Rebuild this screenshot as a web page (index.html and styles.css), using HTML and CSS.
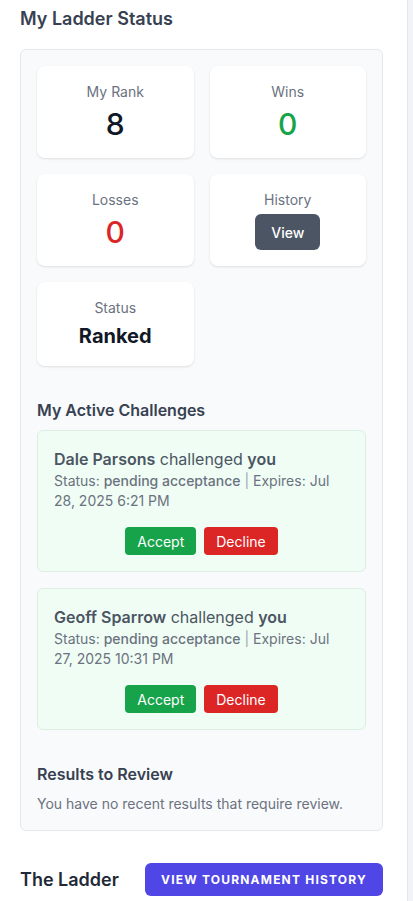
FILE: index.html
```html
<!DOCTYPE html>
<html lang="en">
<head>
<meta charset="utf-8">
<title>My Ladder Status</title>
<link rel="stylesheet" href="styles.css">
</head>
<body>
<div class="layout">
  <main class="main">
    <h2 class="page-title">My Ladder Status</h2>
    <section class="panel">
      <div class="stats">
        <div class="stat">
          <div class="stat-label">My Rank</div>
          <div class="stat-value">8</div>
        </div>
        <div class="stat">
          <div class="stat-label">Wins</div>
          <div class="stat-value win">0</div>
        </div>
        <div class="stat">
          <div class="stat-label">Losses</div>
          <div class="stat-value loss">0</div>
        </div>
        <div class="stat">
          <div class="stat-label">History</div>
          <button class="btn-view">View</button>
        </div>
        <div class="stat">
          <div class="stat-label">Status</div>
          <div class="stat-status">Ranked</div>
        </div>
      </div>

      <h3 class="section-title challenges-title">My Active Challenges</h3>
      <div class="challenges">
        <div class="challenge">
          <p class="challenge-head"><strong>Dale Parsons</strong> challenged <strong>you</strong></p>
          <p class="challenge-meta">Status: <b class="meta-strong">pending acceptance</b> <i class="sep">|</i> Expires: Jul 28, 2025 6:21 PM</p>
          <div class="challenge-actions">
            <button class="btn btn-accept">Accept</button>
            <button class="btn btn-decline">Decline</button>
          </div>
        </div>
        <div class="challenge">
          <p class="challenge-head"><strong>Geoff Sparrow</strong> challenged <strong>you</strong></p>
          <p class="challenge-meta">Status: <b class="meta-strong">pending acceptance</b> <i class="sep">|</i> Expires: Jul 27, 2025 10:31 PM</p>
          <div class="challenge-actions">
            <button class="btn btn-accept">Accept</button>
            <button class="btn btn-decline">Decline</button>
          </div>
        </div>
      </div>

      <h3 class="section-title results-title">Results to Review</h3>
      <p class="empty">You have no recent results that require review.</p>
    </section>

    <div class="ladder-head">
      <h2 class="ladder-title">The Ladder</h2>
      <button class="btn-history">View Tournament History</button>
    </div>
  </main>
  <aside class="side"></aside>
</div>
</body>
</html>
```

FILE: styles.css
```css
* { box-sizing: border-box; }
html, body { margin: 0; padding: 0; }
body {
  font-family: Inter, "Noto Sans", "Liberation Sans", sans-serif;
  background: #ffffff;
  color: #374151;
  -webkit-font-smoothing: antialiased;
}
.layout {
  display: flex;
  min-height: 901px;
}
.main {
  width: 408px;
  flex: none;
  padding: 5px 24px 0 20px;
  border-right: 1px solid #e2e6ef;
  overflow: hidden;
}
.side {
  flex: 1;
  background: #f1f3f8;
}
.page-title {
  margin: 0 0 16px;
  font-size: 18px;
  line-height: 28px;
  font-weight: 600;
  color: #374151;
}
.panel {
  background: #f9fafb;
  border: 1px solid #e5e7eb;
  border-radius: 6px;
  padding: 16px;
}
.stats {
  display: grid;
  grid-template-columns: 1fr 1fr;
  gap: 16px;
}
.stat {
  background: #ffffff;
  border-radius: 8px;
  box-shadow: 0 1px 3px rgba(0,0,0,0.08), 0 1px 2px rgba(0,0,0,0.04);
  padding: 16px;
  text-align: center;
  display: flex;
  flex-direction: column;
  align-items: center;
}
.stat-label {
  font-size: 14px;
  line-height: 20px;
  color: #6b7280;
}
.stat-value {
  margin-top: 4px;
  font-size: 30px;
  line-height: 36px;
  font-weight: 500;
  color: #111827;
}
.stat-value.win { color: #16a34a; }
.stat-value.loss { color: #dc2626; }
.stat-status {
  margin-top: 4px;
  font-size: 20px;
  line-height: 28px;
  font-weight: 700;
  color: #111827;
}
.btn-view {
  margin-top: 4px;
  height: 36px;
  width: 65px;
  border: none;
  border-radius: 6px;
  background: #4b5563;
  color: #ffffff;
  font-family: inherit;
  font-size: 14px;
  font-weight: 500;
  padding: 0;
}
.section-title {
  margin: 0;
  font-size: 16px;
  line-height: 24px;
  font-weight: 600;
  color: #374151;
}
.challenges-title { margin-top: 32px; margin-bottom: 8px; }
.challenges {
  display: flex;
  flex-direction: column;
  gap: 16px;
}
.challenge {
  background: #f0fdf4;
  border: 1px solid #dcefe2;
  border-radius: 6px;
  padding: 16px;
}
.challenge-head {
  margin: 0;
  font-size: 16px;
  line-height: 24px;
  color: #4b5563;
}
.challenge-head strong { font-weight: 600; }
.challenge-meta {
  margin: 0;
  font-size: 14px;
  line-height: 20px;
  color: #6b7280;
}
.meta-strong { font-weight: 500; }
.sep { color: #9ca3af; font-style: normal; }
.challenge-actions {
  margin-top: 16px;
  display: flex;
  justify-content: center;
  gap: 8px;
}
.btn {
  height: 28px;
  padding: 0 12px;
  border: none;
  border-radius: 4px;
  color: #ffffff;
  font-family: inherit;
  font-size: 14px;
  font-weight: 400;
}
.btn-accept { background: #16a34a; }
.btn-decline { background: #dc2626; }
.results-title { margin-top: 32px; }
.empty {
  margin: 8px 0 0;
  font-size: 14px;
  line-height: 20px;
  color: #6b7280;
}
.ladder-head {
  margin-top: 32px;
  display: flex;
  justify-content: space-between;
  align-items: center;
}
.ladder-title {
  margin: 0;
  font-size: 18px;
  line-height: 28px;
  font-weight: 600;
  color: #1f2937;
}
.btn-history {
  height: 33px;
  padding: 0 16px;
  border: none;
  border-radius: 6px;
  background: #4f46e5;
  color: #ffffff;
  font-family: inherit;
  font-size: 12px;
  font-weight: 700;
  letter-spacing: 0.1em;
  text-transform: uppercase;
}
```
